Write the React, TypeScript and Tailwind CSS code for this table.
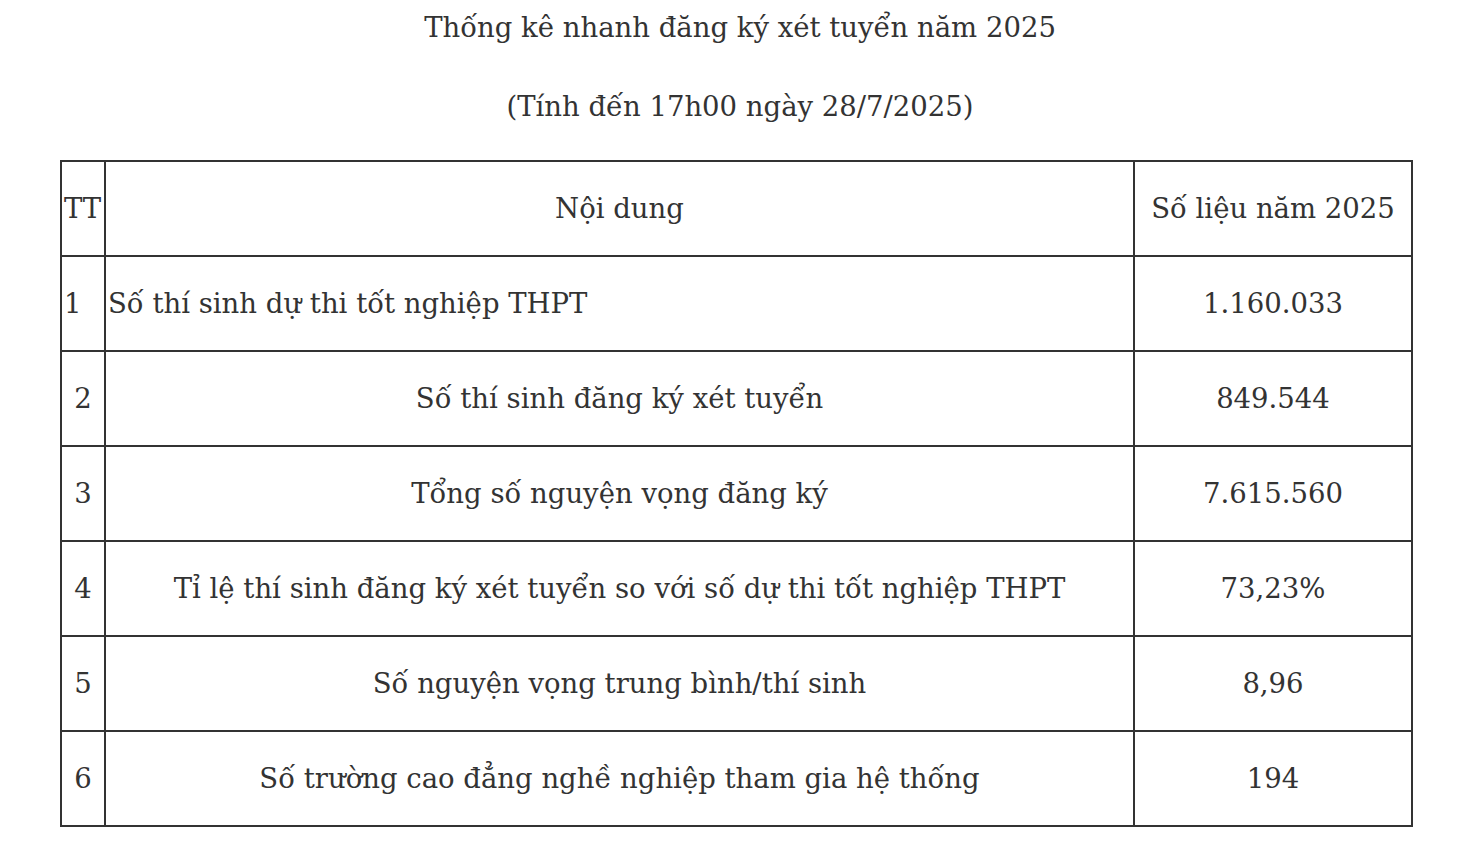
import React from "react";

const rows: { tt: string; content: string; value: string; left?: boolean }[] = [
  { tt: "1", content: "Số thí sinh dự thi tốt nghiệp THPT", value: "1.160.033", left: true },
  { tt: "2", content: "Số thí sinh đăng ký xét tuyển", value: "849.544" },
  { tt: "3", content: "Tổng số nguyện vọng đăng ký", value: "7.615.560" },
  { tt: "4", content: "Tỉ lệ thí sinh đăng ký xét tuyển so với số dự thi tốt nghiệp THPT", value: "73,23%" },
  { tt: "5", content: "Số nguyện vọng trung bình/thí sinh", value: "8,96" },
  { tt: "6", content: "Số trường cao đẳng nghề nghiệp tham gia hệ thống", value: "194" },
];

export default function App() {
  return (
    <div
      className="w-[1480px] h-[854px] bg-white text-[#333333] text-[27.5px]"
      style={{ fontFamily: '"DejaVu Serif", "Liberation Serif", serif' }}
    >
      <div className="h-[55px] flex items-center justify-center">Thống kê nhanh đăng ký xét tuyển năm 2025</div>
      <div className="h-[105px] flex items-start justify-center pt-[31px]">(Tính đến 17h00 ngày 28/7/2025)</div>
      <table className="ml-[60px] w-[1351px] border-collapse table-fixed">
        <colgroup>
          <col className="w-[44px]" />
          <col className="w-[1029px]" />
          <col className="w-[278px]" />
        </colgroup>
        <tbody>
          <tr className="h-[95px]">
            <td className="border-2 border-[#333333] p-0 pl-[2px] text-left">TT</td>
            <td className="border-2 border-[#333333] p-0 text-center">Nội dung</td>
            <td className="border-2 border-[#333333] p-0 text-center">Số liệu năm 2025</td>
          </tr>
          {rows.map((r) => (
            <tr key={r.tt} className="h-[95px]">
              <td className={`border-2 border-[#333333] p-0 ${r.left ? "text-left pl-[2px]" : "text-center"}`}>{r.tt}</td>
              <td className={`border-2 border-[#333333] p-0 ${r.left ? "text-left pl-[2px]" : "text-center"}`}>{r.content}</td>
              <td className="border-2 border-[#333333] p-0 text-center">{r.value}</td>
            </tr>
          ))}
        </tbody>
      </table>
    </div>
  );
}
